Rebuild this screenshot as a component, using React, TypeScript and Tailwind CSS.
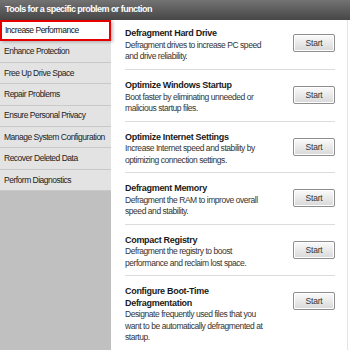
import React from 'react';

const categories = [
  'Increase Performance',
  'Enhance Protection',
  'Free Up Drive Space',
  'Repair Problems',
  'Ensure Personal Privacy',
  'Manage System Configuration',
  'Recover Deleted Data',
  'Perform Diagnostics',
];

const tools = [
  { title: ['Defragment Hard Drive'], desc: ['Defragment drives to increase PC speed', 'and drive reliability.'] },
  { title: ['Optimize Windows Startup'], desc: ['Boot faster by eliminating unneeded or', 'malicious startup files.'] },
  { title: ['Optimize Internet Settings'], desc: ['Increase Internet speed and stability by', 'optimizing connection settings.'] },
  { title: ['Defragment Memory'], desc: ['Defragment the RAM to improve overall', 'speed and stability.'] },
  { title: ['Compact Registry'], desc: ['Defragment the registry to boost', 'performance and reclaim lost space.'] },
  {
    title: ['Configure Boot-Time', 'Defragmentation'],
    desc: ['Designate frequently used files that you', 'want to be automatically defragmented at', 'startup.'],
  },
];

function StartButton() {
  return (
    <button className="w-[42px] h-[18px] shrink-0 rounded-[2px] border border-[#8e8e8e] bg-gradient-to-b from-[#fbfbfb] to-[#d8d8d8] text-[8.5px] tracking-[-0.2px] text-[#333] shadow-[inset_0_0_0_1px_#ffffff]">
      Start
    </button>
  );
}

export default function App() {
  return (
    <div className="w-[350px] h-[350px] overflow-hidden bg-white flex flex-col" style={{ fontFamily: 'Tahoma, "Liberation Sans", sans-serif' }}>
      {/* Header */}
      <div className="h-[20px] shrink-0 bg-gradient-to-b from-[#737373] to-[#474747] flex items-center px-[5px]">
        <span className="text-white font-bold text-[9px] tracking-[-0.55px] whitespace-nowrap">Tools for a specific problem or function</span>
      </div>

      <div className="flex flex-1 min-h-0">
        {/* Sidebar */}
        <div className="w-[111px] shrink-0 bg-[#c0c0c0] flex flex-col">
          {categories.map((c, i) => (
            <div
              key={c}
              className={
                i === 0
                  ? 'h-[21.4px] flex items-center pl-[3px] bg-white border-2 border-[#e60000] text-[8.5px] tracking-[-0.5px] whitespace-nowrap text-[#111] shadow-[2px_1px_3px_rgba(0,0,0,0.25)] relative z-10'
                  : 'h-[21.4px] flex items-center pl-[4px] bg-[#e3e3e3] border-b border-[#c9c9c9] text-[8.5px] tracking-[-0.5px] whitespace-nowrap text-[#222]'
              }
            >
              {c}
            </div>
          ))}
        </div>

        {/* Content */}
        <div className="flex-1 border-r border-[#e4e4e4] mr-[2px] pl-[14px] pr-[12px]">
          {tools.map((t, i) => (
            <div
              key={i}
              className={`flex justify-between items-start ${i === 0 ? 'pt-[8px] h-[50px]' : 'pt-[10px] h-[51.5px]'} ${
                i < tools.length - 1 ? 'border-b border-[#dcdcdc]' : ''
              }`}
            >
              <div className="leading-[11.5px] whitespace-nowrap">
                {t.title.map((l) => (
                  <div key={l} className="font-bold text-[9px] tracking-[-0.3px] text-[#1a1a1a]">
                    {l}
                  </div>
                ))}
                {t.desc.map((l) => (
                  <div key={l} className="text-[8.5px] tracking-[-0.45px] text-[#333]">
                    {l}
                  </div>
                ))}
              </div>
              <div className="pt-[1px]">
                <StartButton />
              </div>
            </div>
          ))}
        </div>
      </div>
    </div>
  );
}
